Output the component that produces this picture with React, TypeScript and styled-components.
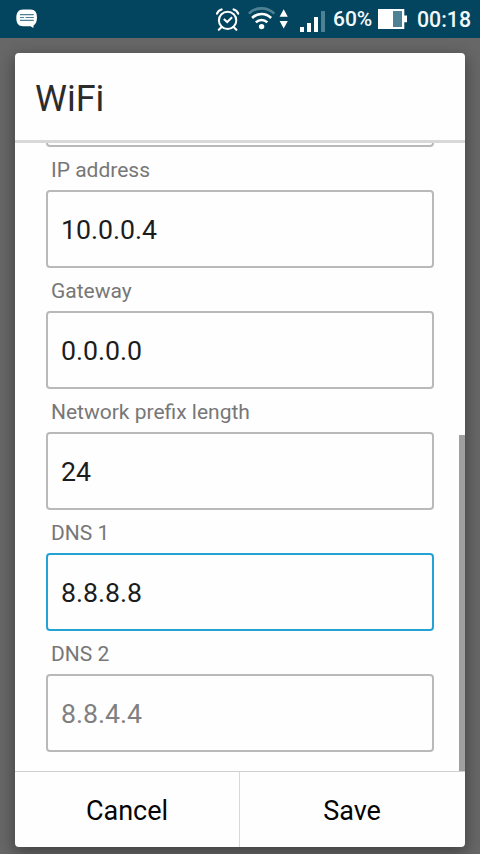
import React from "react";
import styled, { createGlobalStyle } from "styled-components";

const GlobalStyle = createGlobalStyle`
  *, *::before, *::after { box-sizing: border-box; }
  html, body { margin: 0; padding: 0; }
  body { font-family: Roboto, "Liberation Sans", sans-serif; background: #676767; overflow: hidden; }
`;

const Screen = styled.div`
  display: flex;
  flex-direction: column;
  width: 480px;
  height: 854px;
  background: #676767;
  overflow: hidden;
`;

const StatusBar = styled.header`
  display: flex;
  flex: none;
  align-items: center;
  height: 38px;
  padding: 0 9px 0 0;
  background: #03455f;
  color: #f4f9fb;
`;

const StatusIcon = styled.svg<{ $gap?: number }>`
  flex: none;
  display: block;
  margin-left: ${(p) => p.$gap ?? 0}px;
`;

const Spacer = styled.div`
  flex: 1;
`;

const StatusText = styled.span<{ $width: number; $size: number; $gap: number; $drop?: number }>`
  flex: none;
  width: ${(p) => p.$width}px;
  height: 38px;
  margin-left: ${(p) => p.$gap}px;
  padding-top: ${(p) => p.$drop ?? 0}px;
  font-size: ${(p) => p.$size}px;
  font-weight: 500;
  line-height: 38px;
  white-space: nowrap;
`;

const Backdrop = styled.main`
  flex: 1;
  min-height: 0;
  padding: 15px 15px 7px;
  overflow: hidden;
`;

const Dialog = styled.section`
  display: flex;
  flex-direction: column;
  height: 794px;
  border-radius: 4px;
  background: #fefefe;
  box-shadow: 0 5px 16px 1px rgba(0, 0, 0, 0.36);
`;

const Title = styled.h1`
  flex: none;
  height: 90px;
  margin: 0;
  padding: 3px 0 0 20px;
  border-bottom: 3px solid #d8d8d8;
  color: #2c2c2c;
  font-size: 36px;
  font-weight: 400;
  line-height: 86px;
`;

const Body = styled.div`
  display: flex;
  flex: 1;
  min-height: 0;
`;

const Form = styled.form`
  display: flex;
  flex: 1;
  flex-direction: column;
  justify-content: flex-end;
  min-height: 0;
  padding: 0 25px 19px 31px;
  overflow: hidden;
`;

const ScrollTrack = styled.div`
  display: flex;
  flex: none;
  align-items: flex-end;
  width: 6px;
`;

const ScrollThumb = styled.div`
  width: 6px;
  height: 336px;
  background: #9f9f9f;
`;

const Field = styled.label`
  display: block;
  flex: none;
`;

const FieldLabel = styled.span`
  display: block;
  height: 43px;
  padding: 1px 0 0 5px;
  color: #777;
  font-size: 21px;
  line-height: 45px;
`;

const Input = styled.input<{ $active?: boolean }>`
  display: block;
  width: 388px;
  height: 78px;
  margin: 0;
  padding: 2px 13px 0;
  border: 2px solid ${(p) => (p.$active ? "#23a3d3" : "#b9b9b9")};
  border-radius: 4px;
  outline: none;
  background: #fefefe;
  color: #1c1c1c;
  font-family: inherit;
  font-size: 26.7px;
  &::placeholder { color: #808080; opacity: 1; }
`;

const Actions = styled.footer`
  display: grid;
  flex: none;
  grid-template-columns: 224px 226px;
  height: 76px;
  border-top: 1px solid #d0d0d0;
`;

const ActionButton = styled.button`
  margin: 0;
  padding: 3px 0 0;
  border: 0;
  background: transparent;
  color: #050505;
  font-family: inherit;
  font-size: 27px;
  & + & { border-left: 1px solid #d8d8d8; padding-right: 1px; }
`;

const fields = [
  { label: "IP address", value: "10.0.0.4" },
  { label: "Gateway", value: "0.0.0.0" },
  { label: "Network prefix length", value: "24" },
  { label: "DNS 1", value: "8.8.8.8", active: true },
  { label: "DNS 2", placeholder: "8.8.4.4" },
];

const MessageIcon = () => (
  <StatusIcon $gap={16} width="22" height="38" viewBox="16 0 22 38">
    <path d="M23 9.6H30.5C35 9.6 37 12.5 37 17.5C37 21.6 35.7 24.4 33.6 25.5L33.3 28L30.6 26.2H23C18.4 26.2 16.3 23.2 16.3 18S18.4 9.6 23 9.6Z" fill="#fff" />
    <path d="M20 14.6H33.8M20 17.5H24M25.5 17.5H33.8M20 20.4H33.8" stroke="#4d8093" strokeWidth="1.2" />
  </StatusIcon>
);

const AlarmIcon = () => (
  <StatusIcon width="25" height="38" viewBox="215 0 25 38" fill="none" stroke="#fff">
    <circle cx="227.6" cy="20.4" r="8.7" strokeWidth="2" />
    <path d="M217 13.7Q218.1 10.6 221.6 9.5M238.2 13.7Q237.1 10.6 233.6 9.5" strokeWidth="2.2" strokeLinecap="round" />
    <path d="M221.6 27L218.8 29.8M233.6 27L236.4 29.8" strokeWidth="2.1" strokeLinecap="round" />
    <path d="M223.8 18.9L227.2 22L232.1 17.2" strokeWidth="2" />
  </StatusIcon>
);

const WifiIcon = () => (
  <StatusIcon $gap={8} width="28" height="38" viewBox="248 0 28 38" fill="none" stroke="#fff" strokeWidth="2.6">
    <path d="M248.9 13.6A18 18 0 0 1 274.3 13.6" stroke="#4d8193" />
    <path d="M252.1 18A13.4 13.4 0 0 1 271.1 18" />
    <path d="M255.9 22.4A8.1 8.1 0 0 1 267.3 22.4" />
    <circle cx="261.6" cy="26.6" r="2.7" fill="#fff" stroke="none" />
  </StatusIcon>
);

const TrafficIcon = () => (
  <StatusIcon $gap={3} width="10" height="38" viewBox="279 0 10 38" fill="#fff">
    <path d="M279.6 16.8L283.7 9.3L287.8 16.8ZM279.6 21L283.7 28.4L287.8 21Z" />
  </StatusIcon>
);

const SignalIcon = () => (
  <StatusIcon $gap={10} width="27" height="38" viewBox="299 0 27 38" fill="#fff">
    <path d="M300 27H304V32H300ZM307 23H311V32H307ZM314 17H318V32H314Z" />
    <path d="M321 11H325V32H321Z" fill="#4d8193" />
  </StatusIcon>
);

const BatteryIcon = () => (
  <StatusIcon width="29" height="38" viewBox="378 0 29 38">
    <path d="M378 9H404.3V15.5H407V22.3H404.3V29H378Z" fill="#fff" />
    <path d="M393 11H402V27H393Z" fill="#4d8193" />
  </StatusIcon>
);

export default function App() {
  return (
    <>
      <GlobalStyle />
      <Screen>
        <StatusBar>
          <MessageIcon />
          <Spacer />
          <AlarmIcon />
          <WifiIcon />
          <TrafficIcon />
          <SignalIcon />
          <StatusText $gap={7} $width={45} $size={21}>60%</StatusText>
          <BatteryIcon />
          <StatusText $gap={10} $width={54} $size={21.3} $drop={1}>00:18</StatusText>
        </StatusBar>
        <Backdrop>
          <Dialog>
            <Title>WiFi</Title>
            <Body>
              <Form>
                <Field>
                  <Input readOnly tabIndex={-1} aria-label="IP settings" />
                </Field>
                {fields.map((f) => (
                  <Field key={f.label}>
                    <FieldLabel>{f.label}</FieldLabel>
                    <Input $active={f.active} defaultValue={f.value} placeholder={f.placeholder} />
                  </Field>
                ))}
              </Form>
              <ScrollTrack>
                <ScrollThumb />
              </ScrollTrack>
            </Body>
            <Actions>
              <ActionButton type="button">Cancel</ActionButton>
              <ActionButton type="button">Save</ActionButton>
            </Actions>
          </Dialog>
        </Backdrop>
      </Screen>
    </>
  );
}
